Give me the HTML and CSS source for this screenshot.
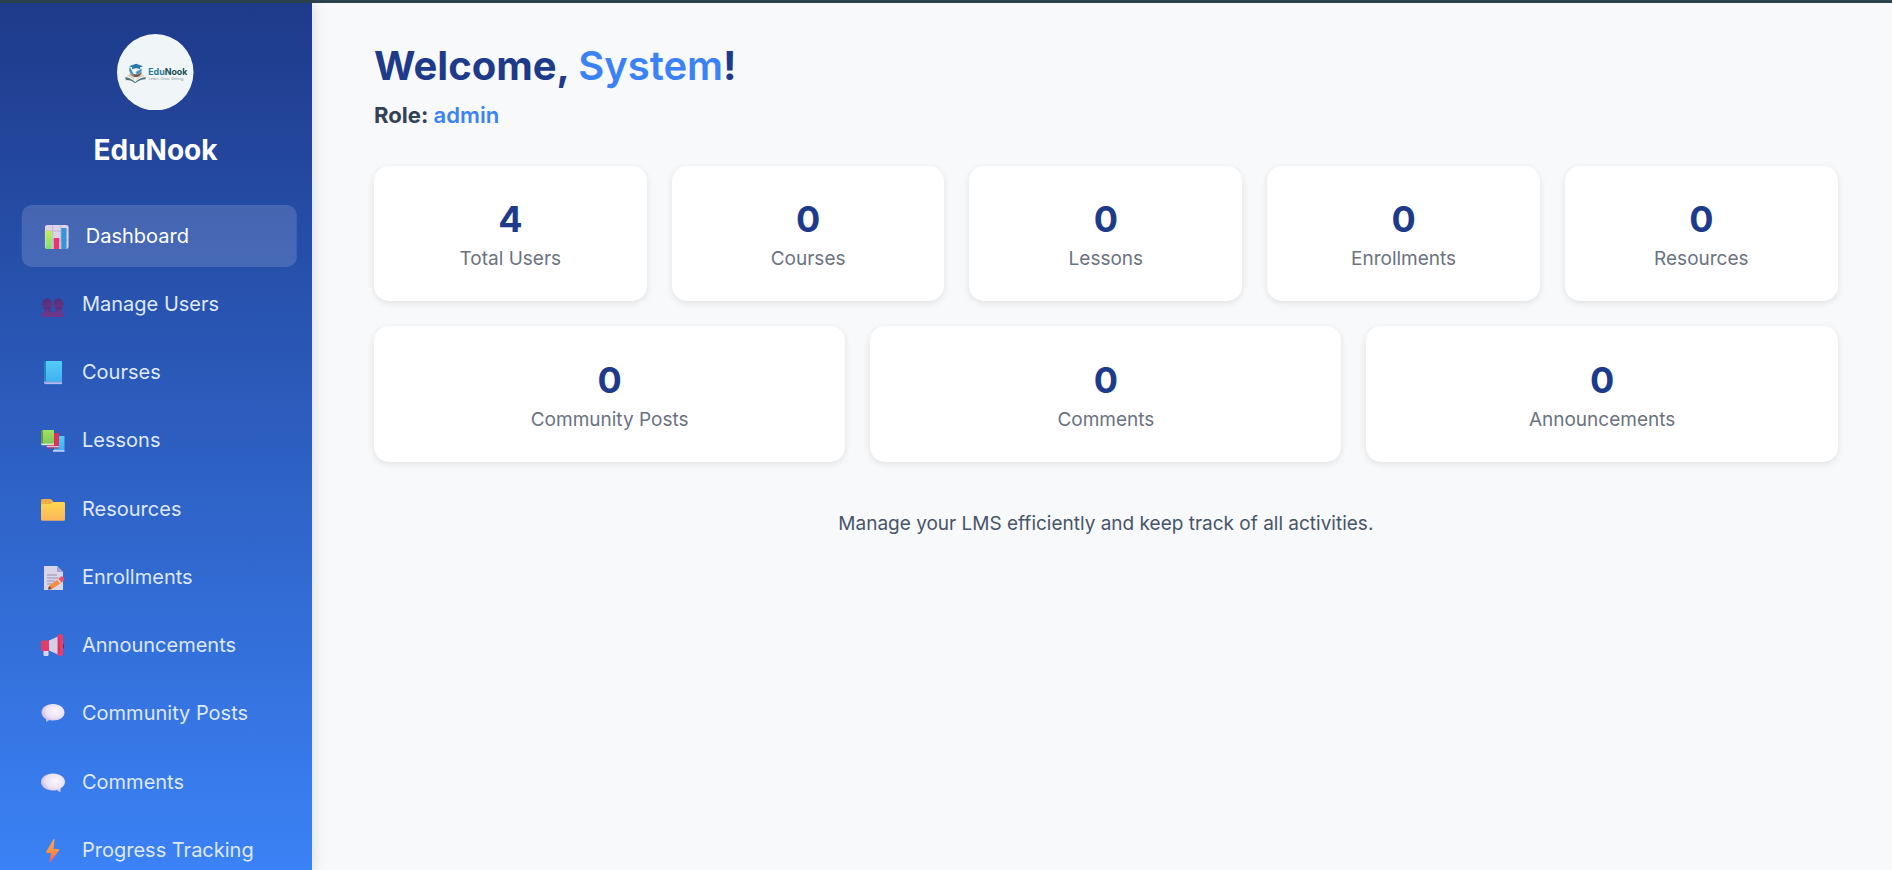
FILE: index.html
```html
<!DOCTYPE html>
<html lang="en">
<head>
<meta charset="utf-8">
<title>EduNook Dashboard</title>
<link rel="stylesheet" href="styles.css">
</head>
<body>
<svg class="defs" width="0" height="0" aria-hidden="true">
  <defs>
    <linearGradient id="green" x1="0" y1="0" x2="0" y2="1"><stop offset="0" stop-color="#a5e05c"/><stop offset="1" stop-color="#7fc95c"/></linearGradient>
    <linearGradient id="lime" x1="0" y1="0" x2="0" y2="1"><stop offset="0" stop-color="#c0f04e"/><stop offset="1" stop-color="#7fdd7c"/></linearGradient>
    <linearGradient id="cyan" x1="0" y1="0" x2="0" y2="1"><stop offset="0" stop-color="#52cdf6"/><stop offset="1" stop-color="#3fb0f0"/></linearGradient>
    <linearGradient id="gold" x1="0" y1="0" x2="0" y2="1"><stop offset="0" stop-color="#fdd850"/><stop offset="1" stop-color="#fcb55c"/></linearGradient>
    <linearGradient id="flame" x1="0" y1="0" x2="0" y2="1"><stop offset="0" stop-color="#fba84a"/><stop offset=".5" stop-color="#fb9245"/><stop offset="1" stop-color="#f2585e"/></linearGradient>
    <linearGradient id="plum" x1="0" y1="0" x2="0" y2="1"><stop offset="0" stop-color="#50307a"/><stop offset="1" stop-color="#6b3588"/></linearGradient>
    <radialGradient id="cloud" cx=".6" cy=".4" r=".65"><stop offset="0" stop-color="#faf5fc"/><stop offset=".6" stop-color="#ebe3f6"/><stop offset="1" stop-color="#c7b5e6"/></radialGradient>
  </defs>
</svg>
<div class="topbar"></div>
<div class="layout">
  <aside class="sidebar">
    <div class="brand">
      <svg class="logo" viewBox="0 0 76 76">
        <circle cx="38" cy="38" r="38" fill="#f0f5f8"/>
        <path d="M8 43q5 0 10 5q5-5 11-5l-1 2q-5 0-10 4q-5-4-9-3z" fill="#4d7476"/>
        <path d="M10 42l3-3q3 1 5 8q3-6 7-7l3 2q-6 0-10 5q-4-5-8-5z" fill="#d9cdb5"/>
        <path d="M13 38q5 4 12 0q-2 5-7 5q-4-1-5-5z" fill="#7d5548"/>
        <path d="M13 33q-2 6 4 8M24 35q1 3-4 5l-1-2z" fill="#3b89bc" stroke="#68a9ca"/>
        <path d="M12 32l7-2.500 7 2.500-3 1v2q-4-2-8 0v-2z" fill="#2479ae"/>
        <text x="31" y="40.500" class="logo-name" fill="#2878a0">Edu<tspan fill="#174c52">Nook</tspan></text>
        <text x="31.500" y="45.500" class="logo-tag">Learn. Grow. Belong.</text>
      </svg>
      <h2 class="brand-name">EduNook</h2>
    </div>
    <nav class="menu">
      <a class="item active"><svg class="icon" viewBox="0 0 24 24"><rect width="24" height="24" rx="3" fill="#ddd5e5"/><path d="M8 0v24M16 0v24M0 6h24M0 15h24" stroke="#b9a9c7" stroke-width=".7"/><rect x="1" y="6" width="6" height="18" fill="url(#lime)"/><rect x="9" y="13" width="5.500" height="11" fill="#e4386f"/><rect x="16.500" y="3" width="5.300" height="21" fill="#3495df"/></svg><span>Dashboard</span></a>
      <a class="item"><svg class="icon" viewBox="0 0 24 24"><g fill="url(#plum)"><ellipse cx="6.200" cy="11" rx="5.200" ry="5.800"/><ellipse cx="17.500" cy="11" rx="5.200" ry="5.800"/><path d="M3 14h6.500v5H3zM14.500 14H21v5h-6.500z"/></g><path d="M0 24q0-5.500 5-6 1.500 1 3 0 2.500.500 3.800 1.500 1.200-1 3.700-1.500 1.500 1 3 0 4.500.500 4.500 6z" fill="#6c3689"/></svg><span>Manage Users</span></a>
      <a class="item"><svg class="icon" viewBox="0 0 24 24"><path d="M3 1.500Q3 0 5 0v20H3z" fill="#2585bd"/><path d="M5 0h15.500Q21 0 21 1v20H5z" fill="url(#cyan)"/><path d="M3 20.500h18V23H4.500Q3 23 3 21z" fill="#c8c4f5"/><path d="M4 21h17M4 23.300h17" stroke="#347fc9" stroke-width=".7"/></svg><span>Courses</span></a>
      <a class="item"><svg class="icon" viewBox="0 0 24 24"><path d="M13 7h10.500v14H13z" fill="url(#cyan)"/><path d="M12 21h11.500v1.800H12z" fill="#b9ccf2"/><path d="M7 4h11v13H7z" fill="#e02f5c"/><path d="M5.500 17H18v1.500H6z" fill="#dfb9de"/><path d="M6 19h12" stroke="#c62759"/><path d="M1 1h12v14H1z" fill="url(#green)"/><path d="M0 2l2-1v14H0z" fill="#659847"/><path d="M0 14.500h13v1.800H.500z" fill="#d7e3c9"/></svg><span>Lessons</span></a>
      <a class="item"><svg class="icon" viewBox="0 0 24 24"><path d="M0 2.500Q0 1 1.500 1H9q1 0 2 1l1.500 2H22q2 0 2 2v6H0z" fill="#f0ae45"/><path d="M0 7.500q0-1.500 1.500-1.500h7Q10 6 11 5t2-1h9.500Q24 4 24 5.500v16q0 1.300-1.500 1.300H1.500Q0 22.800 0 21.500z" fill="url(#gold)"/></svg><span>Resources</span></a>
      <a class="item"><svg class="icon" viewBox="0 0 24 24"><path d="M3 0h13l6 6v18H3z" fill="#d9d5e8"/><path d="M16 0l6 6h-6z" fill="#aaa0c9"/><path d="M6 9h10M6 12h11M6 15h8M6 18h6" stroke="#9990ae"/><path d="M8 20L18.500 12l3 4L11 23l-4 .500z" fill="#f68b3e"/><path d="M8 20l3 3-4 .500z" fill="#6c493f"/><path d="M17 13l3-2.500q1-.500 2 .500l1 1.500q.500 1-.500 2L20 17z" fill="#ee5265"/><path d="M16 13.700l1.500-1 3 3.800-1.500 1z" fill="#e7c8cf"/></svg><span>Enrollments</span></a>
      <a class="item"><svg class="icon" viewBox="0 0 24 24"><path d="M2.500 16h5v5q0 1-1 1h-3q-1 0-1-1z" fill="#d6d5ef"/><path d="M0 8q0-1.500 1.500-1.500H9V17H1.500Q0 17 0 15.500z" fill="#e43c68"/><path d="M8 6.500L18 2v19L8 16.500z" fill="#d5cee4"/><path d="M21 9q2 0 2 3t-2 3z" fill="#543260"/><rect x="16.500" y="0" width="5.500" height="22" rx="2.700" fill="#ea3d68"/><path d="M18 3v16" stroke="#c92864"/></svg><span>Announcements</span></a>
      <a class="item"><svg class="icon" viewBox="0 0 24 24"><path d="M12 2C5 2 .500 6 .500 10.500c0 3 2 5.500 4.500 6.500v2q0 1 1 .500L8.500 18q1.500.500 3.500.500c7 0 11.500-3.500 11.500-8S19 2 12 2z" fill="url(#cloud)"/></svg><span>Community Posts</span></a>
      <a class="item"><svg class="icon" viewBox="0 0 24 24"><path d="M12 2.500C5 2.500 0 6.500 0 11s5 8.500 12 8.500q2 0 4-.500l2.500 2q1 .500 1-.500v-3c2.500-1.500 4.500-3.500 4.500-6.500 0-4.500-5-8.500-12-8.500z" fill="url(#cloud)"/></svg><span>Comments</span></a>
      <a class="item"><svg class="icon" viewBox="0 0 24 24"><path d="M12.500.300q1-.800 1 .500L12.500 10H17q2 0 1 1.500L9.500 23q-1.200 1-1-.500L10 14H6q-1.500 0-.700-1.500z" fill="url(#flame)"/></svg><span>Progress Tracking</span></a>
    </nav>
  </aside>
  <main class="main">
    <h1 class="welcome">Welcome, <span class="accent">System</span>!</h1>
    <p class="role">Role: <span class="accent">admin</span></p>
    <section class="row five">
      <div class="card"><div class="num">4</div><div class="label">Total Users</div></div>
      <div class="card"><div class="num">0</div><div class="label">Courses</div></div>
      <div class="card"><div class="num">0</div><div class="label">Lessons</div></div>
      <div class="card"><div class="num">0</div><div class="label">Enrollments</div></div>
      <div class="card"><div class="num">0</div><div class="label">Resources</div></div>
    </section>
    <section class="row three">
      <div class="card"><div class="num">0</div><div class="label">Community Posts</div></div>
      <div class="card"><div class="num">0</div><div class="label">Comments</div></div>
      <div class="card"><div class="num">0</div><div class="label">Announcements</div></div>
    </section>
    <p class="note">Manage your LMS efficiently and keep track of all activities.</p>
  </main>
</div>
</body>
</html>
```

FILE: styles.css
```css
* { box-sizing: border-box; margin: 0; }
body {
  height: 870px;
  overflow: hidden;
  display: flex;
  flex-direction: column;
  background: #f8f9fb;
  font-family: Inter, "Liberation Sans", sans-serif;
}
.defs { display: block; flex: none; }
.topbar { flex: none; height: 3px; background: #2c434d; }
.layout { flex: 1; min-height: 0; display: flex; }
.sidebar {
  flex: none;
  width: 312px;
  overflow: hidden;
  padding: 30.500px 19px 0 18px;
  background: linear-gradient(180deg, #1e3a8a, #3b82f6);
  box-shadow: 3px 0 12px rgba(0, 0, 0, 0.1);
}
.brand { display: flex; flex-direction: column; align-items: center; }
.logo { display: block; width: 76.500px; height: 76.500px; }
.logo-name { font-size: 8.800px; font-weight: 700; }
.logo-tag { font-size: 3.600px; fill: #8c979b; }
.brand-name {
  margin-top: 20px;
  line-height: 40px;
  font-size: 28px;
  font-weight: 700;
  color: #fff;
}
.menu { display: flex; flex-direction: column; gap: 6.250px; margin-top: 34.700px; }
.item {
  flex: none;
  display: flex;
  align-items: center;
  gap: 17px;
  height: 62px;
  padding-left: 23px;
  border-radius: 10px;
  font-size: 20px;
  color: #dfe8fd;
}
.item.active {
  background: rgba(255, 255, 255, 0.15);
  color: #fff;
  transform: translateX(3.750px);
}
.icon { flex: none; width: 24px; height: 24px; margin-top: 2px; }
.main { flex: 1; padding: 38px 54.300px 0 62px; }
.welcome { line-height: 50px; font-size: 40px; font-weight: 700; color: #1e3a8a; }
.role { margin-top: 9px; line-height: 30px; font-size: 22.100px; font-weight: 700; color: #334155; }
.accent { color: #3b82f6; font-weight: 600; }
.row { display: grid; gap: 25px; }
.five { grid-template-columns: repeat(5, 1fr); margin-top: 35.700px; }
.three { grid-template-columns: repeat(3, 1fr); margin-top: 24.700px; }
.card {
  height: 135.700px;
  padding-top: 30.400px;
  border-radius: 15px;
  background: #fff;
  box-shadow: 0 2px 7px rgba(0, 0, 0, 0.1);
  text-align: center;
}
.three .card { padding-top: 31px; }
.num { line-height: 46px; font-size: 36px; font-weight: 700; color: #1e3a8a; }
.label { margin-top: 4px; line-height: 26px; font-size: 19px; color: #6b7280; }
.note { margin-top: 48.200px; line-height: 28px; font-size: 19px; text-align: center; color: #475569; }
```
